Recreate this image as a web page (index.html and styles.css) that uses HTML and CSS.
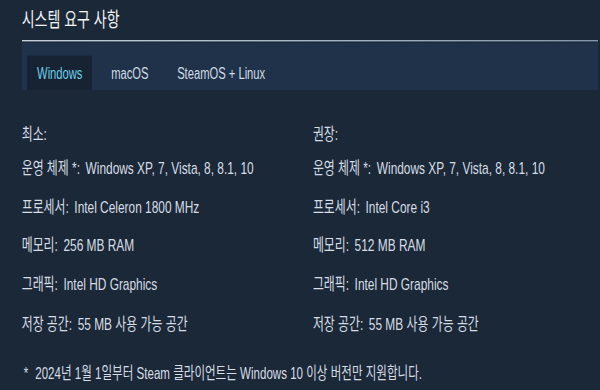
FILE: index.html
```html
<!DOCTYPE html>
<html lang="ko">
<head>
<meta charset="utf-8">
<link rel="stylesheet" href="styles.css">
</head>
<body>
<div class="page">
  <h2 class="title">시스템 요구 사항</h2>
  <div class="tabs">
    <div class="tab active">Windows</div>
    <div class="tab">macOS</div>
    <div class="tab">SteamOS + Linux</div>
  </div>
  <div class="cols">
    <div class="col">
      <div class="head">최소:</div>
      <ul class="list">
        <li><span class="lbl">운영 체제 *:</span><span class="val">Windows XP, 7, Vista, 8, 8.1, 10</span></li>
        <li><span class="lbl">프로세서:</span><span class="val">Intel Celeron 1800 MHz</span></li>
        <li><span class="lbl">메모리:</span><span class="val">256 MB RAM</span></li>
        <li><span class="lbl">그래픽:</span><span class="val">Intel HD Graphics</span></li>
        <li><span class="lbl">저장 공간:</span><span class="val">55 MB 사용 가능 공간</span></li>
      </ul>
    </div>
    <div class="col col-right">
      <div class="head">권장:</div>
      <ul class="list">
        <li><span class="lbl">운영 체제 *:</span><span class="val">Windows XP, 7, Vista, 8, 8.1, 10</span></li>
        <li><span class="lbl">프로세서:</span><span class="val">Intel Core i3</span></li>
        <li><span class="lbl">메모리:</span><span class="val">512 MB RAM</span></li>
        <li><span class="lbl">그래픽:</span><span class="val">Intel HD Graphics</span></li>
        <li><span class="lbl">저장 공간:</span><span class="val">55 MB 사용 가능 공간</span></li>
      </ul>
    </div>
  </div>
  <p class="note"><span class="star">*</span>2024년 1월 1일부터 Steam 클라이언트는 Windows 10 이상 버전만 지원합니다.</p>
</div>
</body>
</html>
```
FILE: styles.css
```css
html, body {
  margin: 0;
  padding: 0;
  background: #1b2838;
  overflow: hidden;
}
body {
  width: 600px;
  height: 390px;
}
.page {
  width: 854px;
  zoom: 0.7;
  transform: scaleY(1.428571);
  transform-origin: 0 0;
  font-family: "Liberation Sans", "Noto Sans CJK KR", sans-serif;
  color: #d6dde4;
  padding-left: 31px;
  box-sizing: border-box;
}
.title {
  margin: 0;
  padding: 7px 0 7px 0;
  font-size: 20px;
  line-height: 26px;
  font-weight: normal;
  color: #f2f4f6;
  border-bottom: 2px solid transparent;
  border-image: linear-gradient(to right, #c2cedb, #9fb2c4 60%, #7f95aa) 1;
}
.tabs {
  margin-top: 2px;
  height: 47px;
  padding: 12px 0 0 8px;
  box-sizing: border-box;
  display: flex;
  gap: 13px;
  background: #1f3249;
}
.tab {
  height: 35px;
  line-height: 36px;
  padding: 0 14px;
  font-size: 16px;
  color: #d0dbe6;
}
.tab.active {
  background: #172333;
  color: #6ccde8;
}
.cols {
  display: flex;
  padding-top: 29px;
}
.col {
  width: 416px;
  flex: none;
}
.col-right {
  flex: 1;
  width: auto;
  min-width: 0;
}
.head {
  font-size: 17px;
  line-height: 30px;
}
.list {
  list-style: none;
  margin: 0;
  padding: 0;
}
.list li {
  font-size: 17px;
  line-height: 39px;
  white-space: nowrap;
}
.val {
  margin-left: 8px;
}
.note {
  margin: 17px 0 0 3px;
  font-size: 16.5px;
  line-height: 24px;
  white-space: nowrap;
}
.star {
  margin-right: 10px;
}
```
